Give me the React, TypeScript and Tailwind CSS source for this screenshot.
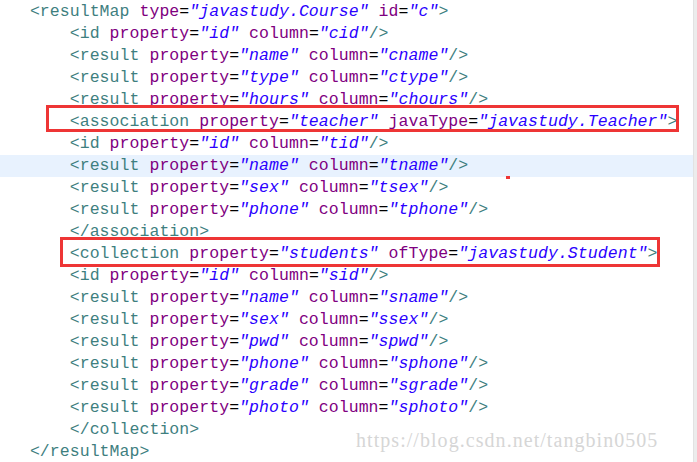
type Tok = [string, string];

const TAG = "text-[#3f7f7f]";
const ATTR = "text-[#7f007f]";
const VAL = "text-[#2a00ff] italic";
const EQ = "text-black";

const attrs = (pairs: [string, string][]): Tok[] =>
  pairs.flatMap(([k, v]) => [
    [" ", ""],
    [k, ATTR],
    ["=", EQ],
    [`"${v}"`, VAL],
  ] as Tok[]);

const el = (indent: number, name: string, pairs: [string, string][], self: boolean): Tok[] => [
  [" ".repeat(indent), ""],
  ["<" + name, TAG],
  ...attrs(pairs),
  [self ? "/>" : ">", TAG],
];

const close = (indent: number, name: string): Tok[] => [
  [" ".repeat(indent), ""],
  ["</" + name + ">", TAG],
];

const res = (p: string, c: string) => el(7, "result", [["property", p], ["column", c]], true);
const id = (c: string) => el(7, "id", [["property", "id"], ["column", c]], true);

const lines: Tok[][] = [
  el(3, "resultMap", [["type", "javastudy.Course"], ["id", "c"]], false),
  id("cid"),
  res("name", "cname"),
  res("type", "ctype"),
  res("hours", "chours"),
  el(7, "association", [["property", "teacher"], ["javaType", "javastudy.Teacher"]], false),
  id("tid"),
  res("name", "tname"),
  res("sex", "tsex"),
  res("phone", "tphone"),
  close(7, "association"),
  el(7, "collection", [["property", "students"], ["ofType", "javastudy.Student"]], false),
  id("sid"),
  res("name", "sname"),
  res("sex", "ssex"),
  res("pwd", "spwd"),
  res("phone", "sphone"),
  res("grade", "sgrade"),
  res("photo", "sphoto"),
  close(7, "collection"),
  close(3, "resultMap"),
];

export default function App() {
  return (
    <div className="relative w-[697px] h-[462px] bg-white overflow-hidden flex">
      <div
        className="flex-1 flex flex-col pt-px whitespace-pre text-[16.5px] leading-[22px] tracking-[0.06px]"
        style={{ fontFamily: '"Liberation Mono", monospace' }}
      >
        {lines.map((toks, i) => (
          <div key={i} className={i === 7 ? "bg-[#e8f2fe]" : ""}>
            {toks.map(([t, c], j) => (
              <span key={j} className={c}>
                {t}
              </span>
            ))}
          </div>
        ))}
      </div>
      <div className="w-[4px] bg-[#ececec] border-l border-[#e2e2e2]" />

      {/* annotations */}
      <div className="absolute left-[46px] top-[105px] w-[633px] h-[27px] border-[3px] border-[#ee3535]" />
      <div className="absolute left-[60px] top-[237px] w-[600px] h-[30px] border-[3px] border-[#ee3535]" />
      <div className="absolute left-[506px] top-[176px] w-[4px] h-[3px] bg-[#ee3535]" />

      <div
        className="absolute left-[356px] top-[428px] text-[20px] leading-[24px] tracking-[1.05px] text-[#d6d6d6]"
        style={{ fontFamily: '"Liberation Serif", serif' }}
      >
        https://blog.csdn.net/tangbin0505
      </div>
    </div>
  );
}
